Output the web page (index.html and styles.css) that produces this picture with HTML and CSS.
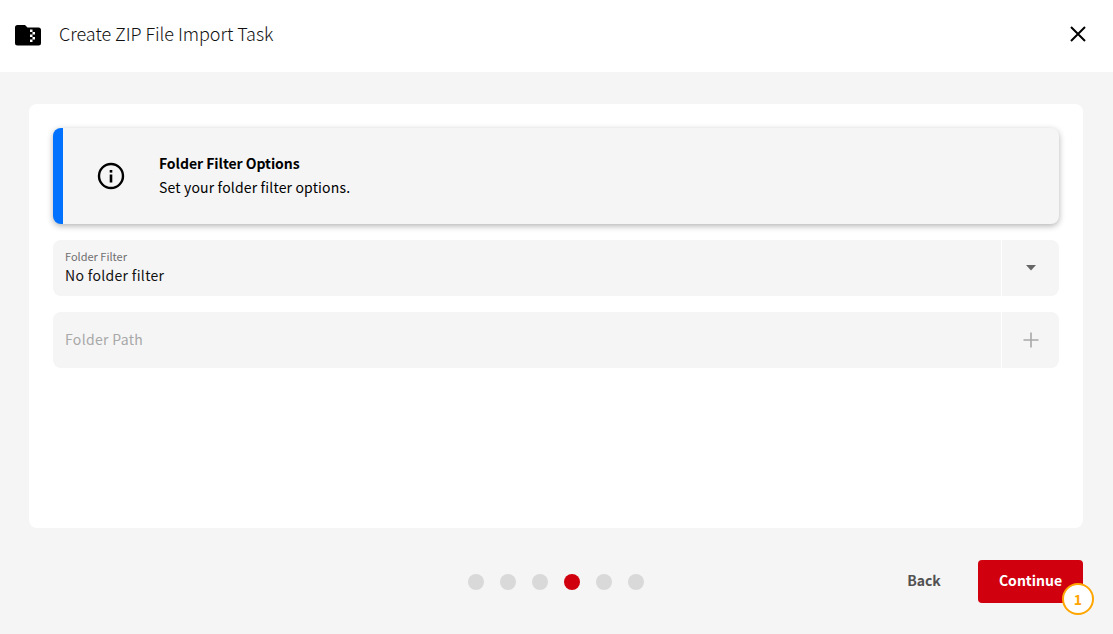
FILE: index.html
```html
<!DOCTYPE html>
<html lang="en">
<head>
<meta charset="utf-8">
<title>Create ZIP File Import Task</title>
<link rel="stylesheet" href="styles.css">
</head>
<body>
<header class="header">
  <svg class="zip-icon" width="28" height="24" viewBox="0 0 28 24" aria-hidden="true">
    <path fill="#000" fill-rule="evenodd" d="M3.500 2H11l2.500 2.500H24.500A2.500 2.500 0 0 1 27 7v13a2.500 2.500 0 0 1-2.500 2.500h-21A2.500 2.500 0 0 1 1 20V4.500A2.500 2.500 0 0 1 3.500 2ZM16 6.500v2.500h2.500V6.500ZM18.500 9v2.500H21V9ZM16 11.500V14h2.500v-2.500ZM18.500 14v2.500H21V14ZM16 16.500V19h2.500v-2.500Z"/>
  </svg>
  <h1 class="title">Create ZIP File Import Task</h1>
  <svg class="close" width="24" height="24" viewBox="0 0 24 24" aria-hidden="true">
    <path d="M5 5l14 14M19 5L5 19" stroke="#000" stroke-width="2" fill="none"/>
  </svg>
</header>
<main class="main">
  <section class="card">
    <div class="banner">
      <svg class="info" width="28" height="28" viewBox="0 0 28 28" aria-hidden="true">
        <circle cx="14" cy="14" r="12" stroke="#000" stroke-width="2.400" fill="none"/>
        <rect x="12.700" y="8" width="2.600" height="2.600" fill="#000"/>
        <rect x="12.700" y="12.500" width="2.600" height="8" fill="#000"/>
      </svg>
      <div class="banner-text">
        <div class="banner-title">Folder Filter Options</div>
        <div class="banner-sub">Set your folder filter options.</div>
      </div>
    </div>
    <div class="field">
      <div class="field-body">
        <div class="field-label">Folder Filter</div>
        <div class="field-value">No folder filter</div>
      </div>
      <div class="field-addon">
        <svg width="12" height="6" viewBox="0 0 12 6" aria-hidden="true"><path d="M1 0h10L6 5.500Z" fill="#666"/></svg>
      </div>
    </div>
    <div class="field field-center">
      <div class="field-body">
        <div class="field-placeholder">Folder Path</div>
      </div>
      <div class="field-addon">
        <svg width="16" height="16" viewBox="0 0 16 16" aria-hidden="true"><path d="M8 .5v15M.5 8h15" stroke="#a8a8a8" stroke-width="1.600" fill="none"/></svg>
      </div>
    </div>
  </section>
  <footer class="footer">
    <div class="dots">
      <span class="dot"></span><span class="dot"></span><span class="dot"></span><span class="dot dot-active"></span><span class="dot"></span><span class="dot"></span>
    </div>
    <div class="actions">
      <button class="btn-back" type="button">Back</button>
      <button class="btn-continue" type="button">Continue<span class="badge">1</span></button>
    </div>
  </footer>
</main>
</body>
</html>
```
FILE: styles.css
```css
* { box-sizing: border-box; }
html, body { margin: 0; height: 100%; }
body {
  width: 1113px;
  height: 634px;
  overflow: hidden;
  display: flex;
  flex-direction: column;
  background: #f5f5f5;
  color: #111;
  font-family: "Noto Sans CJK JP", "Noto Sans", sans-serif;
}
.header {
  height: 72px;
  flex: none;
  background: #fff;
  display: flex;
  align-items: center;
  padding: 0 23.500px 4px 14px;
}
.zip-icon { flex: none; margin-top: 2px; }
.title {
  margin: 0 0 2px 17px;
  font-size: 18px;
  font-weight: 300;
  line-height: 28px;
  letter-spacing: -0.04px;
  color: #111;
  flex: 1;
}
.close { flex: none; }
.main {
  flex: 1;
  padding: 32px 30px 31px 29px;
  display: flex;
  flex-direction: column;
}
.card {
  height: 424px;
  flex: none;
  background: #fff;
  border-radius: 8px;
  padding: 24px;
  display: flex;
  flex-direction: column;
  gap: 16px;
}
.banner {
  height: 96px;
  flex: none;
  background: #f5f5f5;
  border-left: 10px solid #0072ff;
  border-radius: 8px;
  box-shadow: 0 2px 6px rgba(0, 0, 0, 0.3);
  display: flex;
  align-items: center;
  padding-left: 34px;
}
.info { flex: none; margin-right: 34px; }
.banner-text { display: flex; flex-direction: column; padding-bottom: 2px; }
.banner-title { font-size: 14px; font-weight: 700; line-height: 24px; letter-spacing: -0.05px; color: #000; }
.banner-sub { font-size: 14px; font-weight: 400; line-height: 24px; letter-spacing: 0.16px; color: #000; }
.field {
  height: 56px;
  flex: none;
  background: #f5f5f5;
  border-radius: 8px;
  display: flex;
}
.field-body {
  flex: 1;
  padding: 9px 12px 0;
  display: flex;
  flex-direction: column;
}
.field-center .field-body { padding-top: 0; padding-bottom: 2px; justify-content: center; }
.field-label { font-size: 11px; line-height: 14px; color: #6f6f6f; margin-bottom: 2px; }
.field-value { font-size: 14px; line-height: 20px; letter-spacing: 0.32px; color: #111; }
.field-placeholder { font-size: 14px; line-height: 20px; letter-spacing: 0.32px; color: #a8a8a8; }
.field-addon {
  width: 58px;
  flex: none;
  border-left: 1px solid #fff;
  display: flex;
  align-items: center;
  justify-content: center;
}
.footer {
  position: relative;
  flex: 1;
  display: flex;
  align-items: flex-end;
  justify-content: flex-end;
}
.dots {
  position: absolute;
  left: 439px;
  bottom: 13px;
  display: flex;
  gap: 16px;
}
.dot { width: 16px; height: 16px; border-radius: 50%; background: #d9d9d9; }
.dot-active { background: #d0000f; }
.actions { display: flex; align-items: center; gap: 20px; }
.btn-back, .btn-continue {
  font-family: inherit;
  font-size: 14px;
  font-weight: 700;
  border: 0;
  cursor: pointer;
  padding: 0 0 4px;
}
.btn-back {
  width: 68px;
  height: 43px;
  background: transparent;
  color: #525252;
}
.btn-continue {
  position: relative;
  width: 105px;
  height: 43px;
  background: #d0000f;
  color: #fff;
  border-radius: 4px;
}
.badge {
  position: absolute;
  left: 84px;
  top: 23px;
  width: 32px;
  height: 32px;
  border: 2px solid #ffa500;
  border-radius: 50%;
  background: #fff;
  color: #ffa500;
  font-size: 14px;
  font-weight: 700;
  display: flex;
  align-items: center;
  justify-content: center;
}
```
